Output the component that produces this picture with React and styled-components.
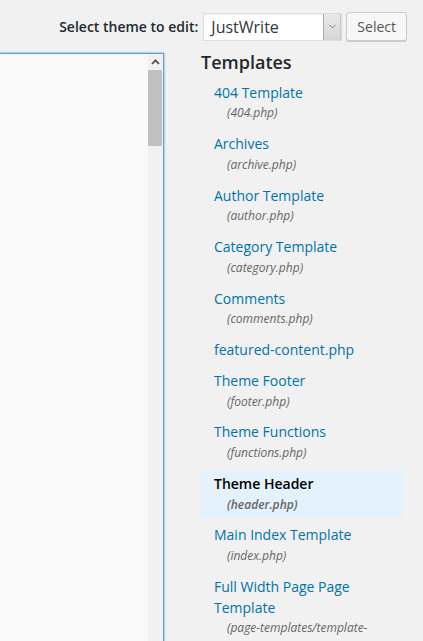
import React from 'react';
import styled, { createGlobalStyle } from 'styled-components';

const GlobalStyle = createGlobalStyle`
  html, body {
    margin: 0;
    padding: 0;
    background: #f1f1f1;
    overflow: hidden;
  }
  body {
    font-family: "Open Sans", "Noto Sans", sans-serif;
    font-size: 14px;
    line-height: 1.5;
    color: #444;
  }
  * { box-sizing: border-box; }
`

const PageStyled = styled.div`
  width: 423px;
  height: 641px;
  overflow: hidden;
`
const ThemeBarStyled = styled.div`
  display: flex;
  justify-content: flex-end;
  align-items: center;
  padding: 12px 16px 0 0;
  height: 41px;
`
const ThemeLabelStyled = styled.label`
  font-weight: 600;
  font-size: 14px;
  color: #23282d;
  margin-right: 5px;
`
const SelectBoxStyled = styled.div`
  display: flex;
  align-items: stretch;
  width: 139px;
  height: 28px;
  background: #fff;
  border: 1px solid #ddd;
  box-shadow: inset 0 1px 2px rgb(0 0 0 / 7%);
  margin-right: 4px;
`
const SelectValueStyled = styled.span`
  flex: 1;
  padding-left: 7px;
  font-size: 16px;
  line-height: 26px;
  color: #32373c;
`
const SelectArrowStyled = styled.span`
  width: 18px;
  display: flex;
  align-items: center;
  justify-content: center;
  background: linear-gradient(#e9e9e9, #d6d6d6);
  border-left: 1px solid #a9a9a9;
  border-right: 1px solid #c6c6c6;
`
const SelectButtonStyled = styled.button`
  height: 29px;
  padding: 0 10px;
  font-family: inherit;
  font-size: 14px;
  color: #555;
  background: #f7f7f7;
  border: 1px solid #ccc;
  border-radius: 3px;
  box-shadow: 0 1px 0 #ccc;
`
const MainRowStyled = styled.div`
  display: flex;
  align-items: flex-start;
  margin-top: 12px;
  gap: 37px;
`
const EditorStyled = styled.div`
  display: flex;
  width: 164px;
  height: 620px;
  flex-shrink: 0;
  background: #f9f9f9;
  border: 1px solid #5b9dd9;
  border-left: none;
  box-shadow: 0 0 2px rgb(30 140 190 / 80%);
`
const EditorTextStyled = styled.div`
  flex: 1;
`
const ScrollTrackStyled = styled.div`
  width: 15px;
  display: flex;
  flex-direction: column;
  background: #f1f1f1;
`
const ScrollButtonStyled = styled.div`
  height: 16px;
  display: flex;
  align-items: center;
  justify-content: center;
`
const ScrollThumbStyled = styled.div`
  height: 76px;
  margin: 0 1px 0 0;
  background: #c1c1c1;
`
const SidebarStyled = styled.div`
  width: 202px;
`
const SidebarHeaderStyled = styled.h2`
  margin: 0;
  font-size: 18px;
  line-height: 18px;
  font-weight: 600;
  color: #23282d;
`
const TemplateListStyled = styled.ul`
  list-style: none;
  margin: 8.5px 0 0;
  padding: 0;
`
const TemplateItemStyled = styled.li`
  margin: 4px 0;
`
const TemplateLinkStyled = styled.a`
  display: block;
  padding: 3px 3px 3px 13px;
  text-decoration: none;
  font-size: 14px;
  line-height: 20.75px;
  color: ${p => p.$active ? '#000' : '#0073aa'};
  font-weight: ${p => p.$active ? 600 : 400};
  background: ${p => p.$active ? '#e4f2fd' : 'transparent'};
`
const FileNameStyled = styled.span`
  display: block;
  padding-left: 13px;
  font-size: 12px;
  line-height: 20.75px;
  font-style: italic;
  color: #666;
`

const templates = [
  { name: '404 Template', file: '404.php' },
  { name: 'Archives', file: 'archive.php' },
  { name: 'Author Template', file: 'author.php' },
  { name: 'Category Template', file: 'category.php' },
  { name: 'Comments', file: 'comments.php' },
  { name: 'featured-content.php' },
  { name: 'Theme Footer', file: 'footer.php' },
  { name: 'Theme Functions', file: 'functions.php' },
  { name: 'Theme Header', file: 'header.php', active: true },
  { name: 'Main Index Template', file: 'index.php' },
  { name: 'Full Width Page Page Template', file: 'page-templates/template-fullwidth.php' },
]

const App = () => {
  return (
    <PageStyled>
      <GlobalStyle />
      <ThemeBarStyled>
        <ThemeLabelStyled>Select theme to edit:</ThemeLabelStyled>
        <SelectBoxStyled>
          <SelectValueStyled>JustWrite</SelectValueStyled>
          <SelectArrowStyled>
            <svg width="7" height="5" viewBox="0 0 7 5">
              <path d="M0.5 0.8 L3.5 3.8 L6.5 0.8" fill="none" stroke="#777" strokeWidth="1" />
            </svg>
          </SelectArrowStyled>
        </SelectBoxStyled>
        <SelectButtonStyled>Select</SelectButtonStyled>
      </ThemeBarStyled>
      <MainRowStyled>
        <EditorStyled>
          <EditorTextStyled />
          <ScrollTrackStyled>
            <ScrollButtonStyled>
              <svg width="9" height="6" viewBox="0 0 9 6">
                <path d="M1 5 L4.5 1.3 L8 5" fill="none" stroke="#505050" strokeWidth="1.8" />
              </svg>
            </ScrollButtonStyled>
            <ScrollThumbStyled />
          </ScrollTrackStyled>
        </EditorStyled>
        <SidebarStyled>
          <SidebarHeaderStyled>Templates</SidebarHeaderStyled>
          <TemplateListStyled>
            {templates.map(t => (
              <TemplateItemStyled key={t.name}>
                <TemplateLinkStyled href="#" $active={t.active}>
                  {t.name}
                  {t.file && <FileNameStyled>({t.file})</FileNameStyled>}
                </TemplateLinkStyled>
              </TemplateItemStyled>
            ))}
          </TemplateListStyled>
        </SidebarStyled>
      </MainRowStyled>
    </PageStyled>
  )
}

export default App
